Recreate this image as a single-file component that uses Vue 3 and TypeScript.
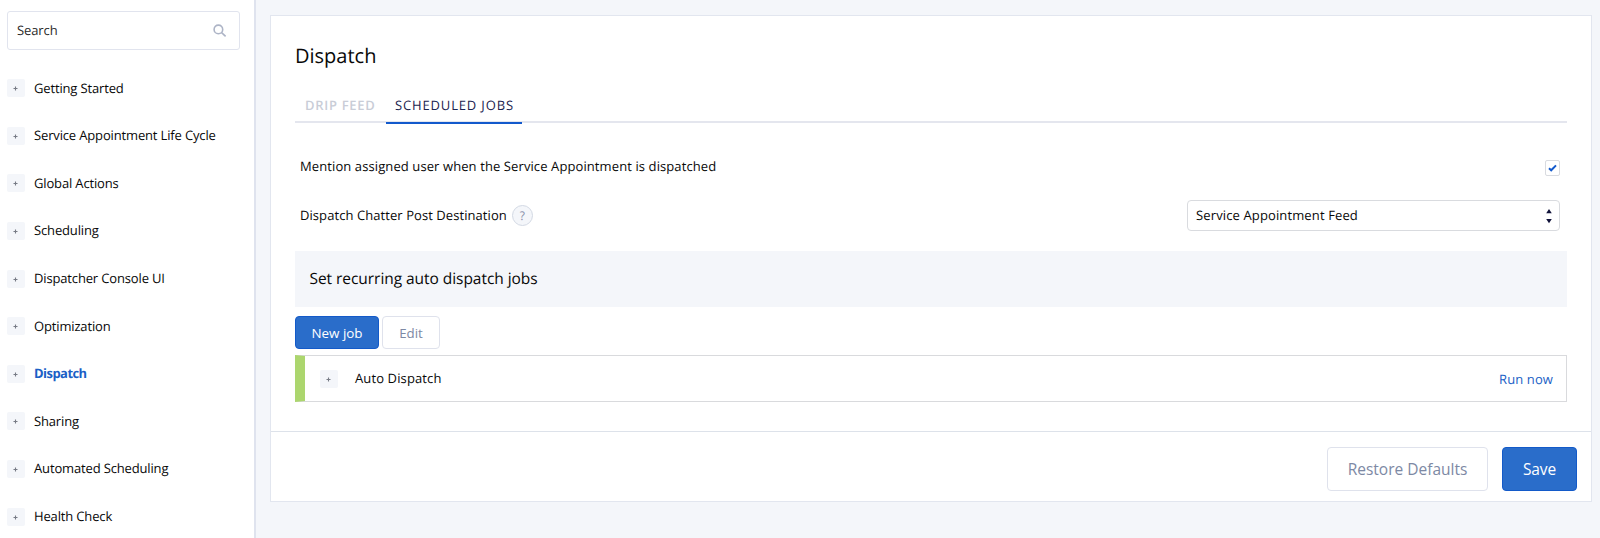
<script setup lang="ts">
import { ref } from 'vue'

const sections: string[] = [
  'Getting Started',
  'Service Appointment Life Cycle',
  'Global Actions',
  'Scheduling',
  'Dispatcher Console UI',
  'Optimization',
  'Dispatch',
  'Sharing',
  'Automated Scheduling',
  'Health Check',
]
const activeSection = ref<string>('Dispatch')
const mention = ref<boolean>(true)
</script>

<template>
  <div class="page">
    <aside class="sidebar">
      <div class="search">
        <span class="search-text">Search</span>
        <svg class="search-icon" viewBox="0 0 14 14">
          <circle cx="5.4" cy="5.4" r="4.3" />
          <path d="M8.6 8.6 L12.6 12.4" />
        </svg>
      </div>
      <nav class="nav">
        <div
          v-for="s in sections"
          :key="s"
          class="nav-item"
          :class="{ active: s === activeSection }"
          @click="activeSection = s"
        >
          <span class="plus"><svg viewBox="0 0 5 5"><path d="M2.5 .5V4.5M.5 2.5H4.5" /></svg></span>
          <span class="nav-label">{{ s }}</span>
        </div>
      </nav>
    </aside>
    <main class="main">
      <section class="card">
        <div class="body">
          <h1 class="title">Dispatch</h1>
          <div class="tabs">
            <div class="tab drip">DRIP FEED</div>
            <div class="tab jobs">SCHEDULED JOBS</div>
          </div>
          <div class="row mention">
            <span class="label">Mention assigned user when the Service Appointment is dispatched</span>
            <span class="check" @click="mention = !mention">
              <svg v-if="mention" viewBox="0 0 9 8"><path d="M1 4.3 L3.2 6.3 L8 1.4" /></svg>
            </span>
          </div>
          <div class="row destination">
            <span class="label">Dispatch Chatter Post Destination</span>
            <span class="help">?</span>
            <div class="select">
              <span class="select-text">Service Appointment Feed</span>
              <svg viewBox="0 0 6 16"><path d="M3 .9 L5.8 5.2 H.2Z M.2 11 H5.8 L3 15.3Z" /></svg>
            </div>
          </div>
          <div class="band"><span>Set recurring auto dispatch jobs</span></div>
          <div class="actions">
            <button class="btn primary small new"><span>New job</span></button>
            <button class="btn small edit"><span>Edit</span></button>
          </div>
          <div class="job">
            <span class="plus"><svg viewBox="0 0 5 5"><path d="M2.5 .5V4.5M.5 2.5H4.5" /></svg></span>
            <span class="job-name">Auto Dispatch</span>
            <a class="run">Run now</a>
          </div>
        </div>
        <footer class="footer">
          <button class="btn restore"><span>Restore Defaults</span></button>
          <button class="btn primary save"><span>Save</span></button>
        </footer>
      </section>
    </main>
  </div>
</template>

<style>
body {
  margin: 0;
  overflow: hidden;
}
</style>

<style scoped>
.page {
  display: flex;
  width: 1600px;
  height: 538px;
  overflow: hidden;
  background: #f4f6fa;
  font-family: "Open Sans", "Noto Sans", sans-serif;
  font-size: 13px;
  color: #080808;
  white-space: nowrap;
  text-rendering: geometricPrecision;
}
.page * {
  box-sizing: border-box;
}
.sidebar {
  width: 256px;
  flex: none;
  padding: 11px 0 0 7px;
  background: #fff;
  border-right: 2px solid #dfe3ee;
}
.search {
  display: flex;
  align-items: center;
  justify-content: space-between;
  width: 233px;
  height: 39px;
  padding: 0 12px 0 9px;
  border: 1px solid #e1e4ee;
  border-radius: 3px;
  color: #2b2b2b;
}
.search-text {
  padding-bottom: 1px;
  letter-spacing: -0.1px;
}
.search-icon {
  width: 14px;
  height: 14px;
  fill: none;
  stroke: #adb4c6;
  stroke-width: 1.6;
}
.nav {
  padding-top: 14.5px;
}
.nav-item {
  display: flex;
  align-items: center;
  height: 47.6px;
  gap: 9px;
}
.nav-label {
  padding-bottom: 1.4px;
  letter-spacing: -0.15px;
}
.plus {
  display: flex;
  align-items: center;
  justify-content: center;
  flex: none;
  width: 18px;
  height: 18px;
  padding: 1px 1px 0 0;
  border-radius: 2px;
  background: #f4f6fa;
}
.plus svg {
  width: 5px;
  height: 5px;
  fill: none;
  stroke: #777b85;
  stroke-width: 1.1;
}
.active .nav-label {
  color: #1b5fc6;
  font-weight: 700;
  letter-spacing: -0.55px;
}
.main {
  flex: 1;
  padding: 15px 8px 0 14px;
}
.card {
  height: 487px;
  background: #fff;
  border: 1px solid #e2e6ef;
}
.body {
  height: 415px;
  padding: 0 24px;
}
.title {
  height: 78px;
  margin: 0;
  padding-top: 26px;
  font-size: 20px;
  line-height: 28px;
  font-weight: 400;
}
.tabs {
  display: flex;
  height: 29px;
  border-bottom: 2px solid #e4e6ee;
}
.tab {
  height: 29px;
  line-height: 22px;
  letter-spacing: 0.85px;
}
.drip {
  width: 91px;
  padding-left: 10px;
  color: #c9cdd7;
  font-weight: 600;
  letter-spacing: 0.7px;
}
.jobs {
  width: 136px;
  height: 30px;
  padding-left: 9px;
  color: #1b2450;
  border-bottom: 2px solid #1259cc;
}
.row {
  display: flex;
  align-items: center;
  padding: 0 7px 0 5px;
}
.label {
  letter-spacing: 0.1px;
}
.mention {
  height: 49px;
  margin-top: 20px;
}
.mention .label {
  padding-bottom: 4px;
}
.check {
  display: flex;
  align-items: center;
  justify-content: center;
  width: 15px;
  height: 16px;
  margin: 0 0 0 auto;
  border: 1px solid #d9dbe0;
  border-radius: 2px;
}
.check svg {
  width: 9px;
  height: 8px;
  fill: none;
  stroke: #1259cc;
  stroke-width: 2;
}
.destination {
  height: 47px;
}
.destination .label {
  padding-bottom: 1px;
  letter-spacing: 0.07px;
}
.help {
  width: 21px;
  height: 21px;
  margin-left: 5px;
  border: 1px solid #d3d9e4;
  border-radius: 50%;
  background: #f4f6fa;
  color: #8a8fa8;
  font-size: 12px;
  line-height: 19px;
  text-align: center;
}
.select {
  display: flex;
  align-items: center;
  justify-content: space-between;
  width: 373px;
  height: 31px;
  margin-left: auto;
  padding: 0 7px 0 8px;
  border: 1px solid #d9dbdf;
  border-radius: 4px;
}
.select-text {
  padding-bottom: 1px;
  letter-spacing: 0.13px;
}
.select svg {
  width: 6px;
  height: 16px;
  fill: #11133a;
}
.band {
  display: flex;
  align-items: center;
  height: 56px;
  margin-top: 12px;
  padding: 0 0 3px 14.5px;
  background: #f4f6fa;
  font-size: 15.5px;
  letter-spacing: -0.05px;
}
.actions {
  display: flex;
  gap: 3px;
  padding-top: 9px;
}
.btn {
  display: flex;
  align-items: center;
  justify-content: center;
  padding: 0 0 1px;
  border: 1px solid #dfe2ec;
  border-radius: 4px;
  background: #fff;
  color: #7d89a4;
  font-family: inherit;
  font-size: 15.5px;
}
.primary {
  background: #2a6dca;
  border-color: #135ac9;
  color: #fff;
}
.small {
  height: 33px;
  padding: 1px 0 0;
  font-size: 13px;
}
.new {
  width: 84px;
  font-size: 13.4px;
  font-weight: 500;
}
.edit {
  width: 58px;
  font-size: 13.3px;
}
.job {
  display: flex;
  align-items: center;
  height: 47px;
  margin-top: 6px;
  padding: 0 13px 0 15px;
  border: 1px solid #d9dadd;
  border-left: 10px solid #acd66e;
}
.job-name {
  margin-left: 17px;
  padding-bottom: 2px;
  letter-spacing: 0.12px;
}
.run {
  margin-left: auto;
  color: #1b5fc6;
  letter-spacing: 0.1px;
}
.footer {
  display: flex;
  justify-content: flex-end;
  gap: 14px;
  height: 70px;
  padding: 15px 14px 0 0;
  border-top: 1px solid #dde2ea;
}
.restore {
  width: 161px;
  height: 44px;
}
.save {
  width: 75px;
  height: 44px;
  font-weight: 500;
  letter-spacing: -0.1px;
}
</style>
